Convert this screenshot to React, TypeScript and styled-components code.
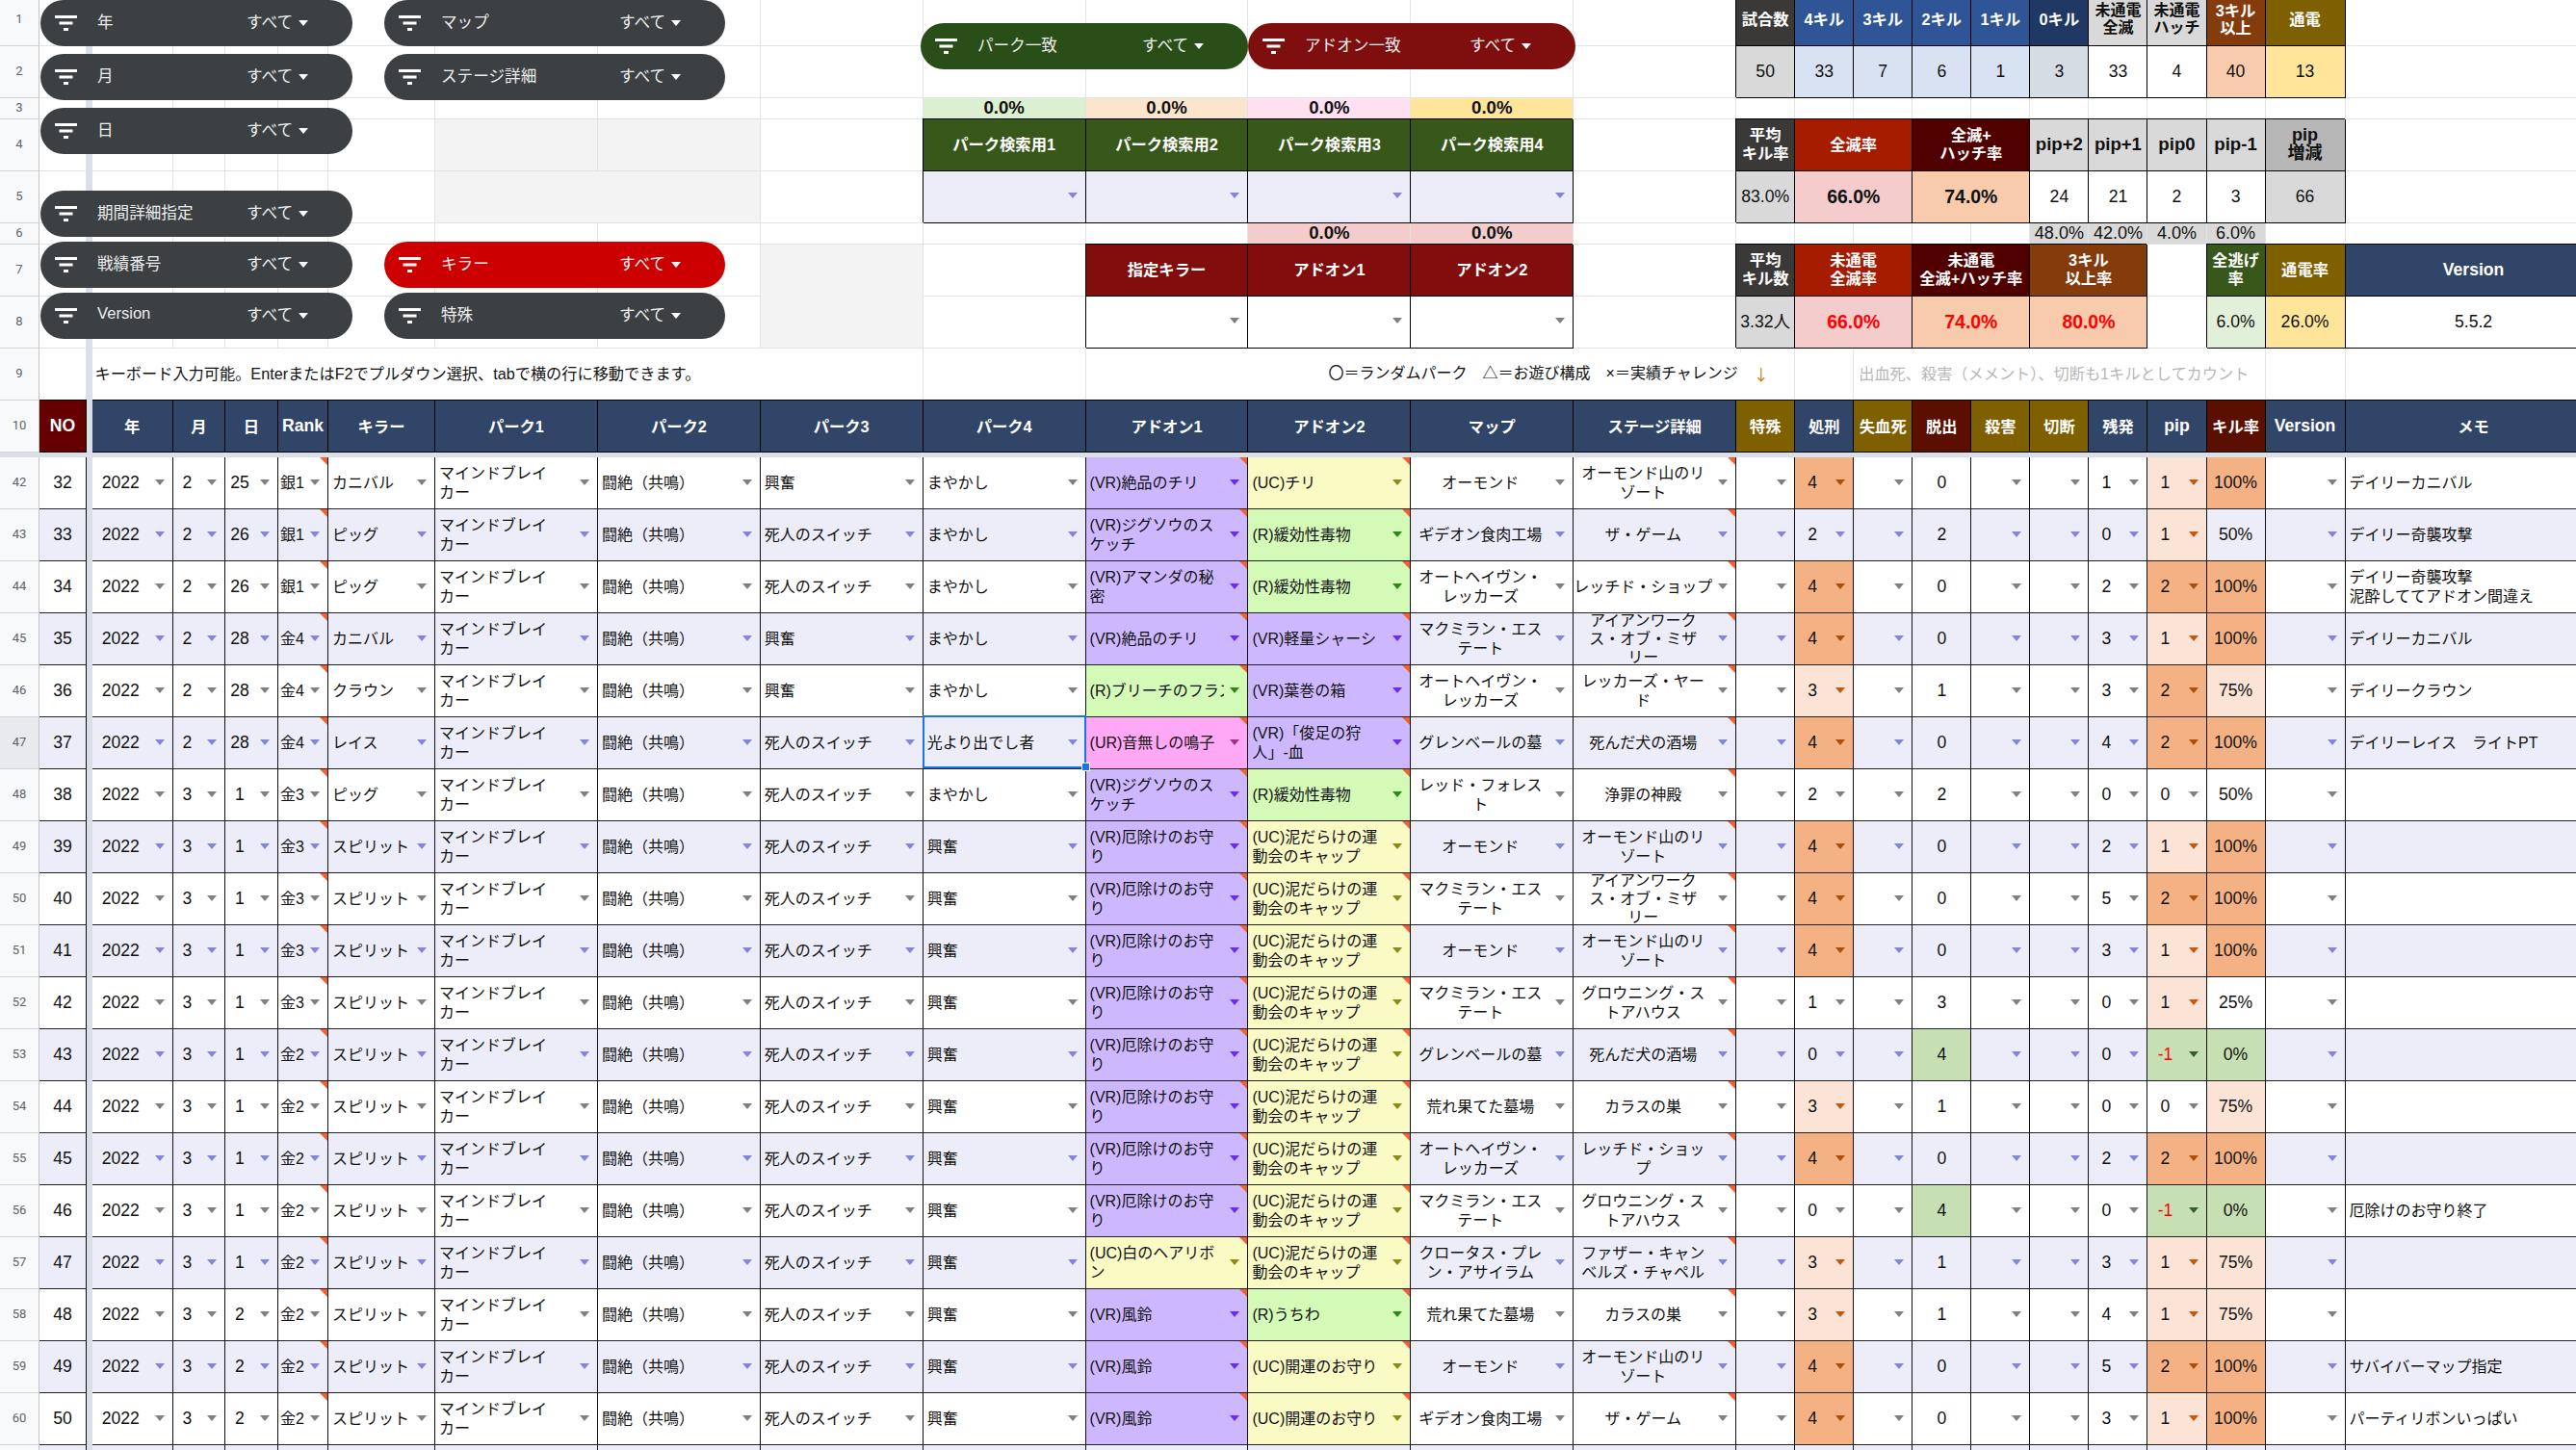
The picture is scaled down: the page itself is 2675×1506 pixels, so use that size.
import React from 'react'
import styled, { createGlobalStyle } from 'styled-components'

const FONT = `"Liberation Sans", "Noto Sans CJK JP", sans-serif`

const GlobalStyle = createGlobalStyle`
  html, body {
    margin: 0;
    padding: 0;
    background: #fff;
    overflow: hidden;
  }
  body {
    font-family: ${FONT};
    color: #111;
  }
`

// sheet columns, left to right (the memo column runs past the window)
const WIDTHS = [
  41, 49, 5.5, 84.5, 54, 55, 52, 111,
  168.9, 168.9, 168.9, 168.9, 168.9, 168.9, 168.9, 168.9,
  61.05, 61.05, 61.05, 61.05, 61.05, 61.05, 61.05, 61.05, 61.05,
  83, 267,
]
const TEMPLATE = WIDTHS.map((w) => `${w}px`).join(' ')

const C = {
  head: 1, no: 2, bar: 3, year: 4, month: 5, day: 6, rank: 7, killer: 8,
  perk1: 9, perk2: 10, perk3: 11, perk4: 12, addon1: 13, addon2: 14, map: 15, stage: 16,
  special: 17, exec: 18, bleed: 19, escape: 20, kill: 21, cut: 22, remain: 23, pip: 24, rate: 25,
  version: 26, memo: 27,
}

const NAVY = '#304567'
const OLIVE = '#7f6000'
const MAROON = '#5b0f00'
const LAVENDER = '#ecedf8'
const FREEZE = '#dadfe8'
const LINE = '#e2e3e3'
const HOT = '#f4b183'
const WARM = '#fbe4d5'
const COOL = '#c6e0b4'

const ARROWS: Record<string, string> = {
  '#ffffff': '#808080',
  [LAVENDER]: '#8585d8',
  [HOT]: '#a8500f',
  [WARM]: '#c05a10',
  [COOL]: '#35602a',
  '#cdb8ff': '#6a2cf0',
  '#fafac5': '#8a8a14',
  '#d4fab8': '#2a8a14',
  '#ffa8f5': '#a0308c',
}

const Sheet = styled.div`
  position: relative;
  width: 2675px;
  height: 1506px;
  overflow: hidden;
`

const TopGrid = styled.div`
  display: grid;
  grid-template-columns: ${TEMPLATE};
  grid-template-rows: 47.5px 54px 22px 54px 54px 22px 54px 54px 54px 54px;
`

const FreezeBar = styled.div`
  height: 5.5px;
  background: ${FREEZE};
`

const DataGrid = styled.div`
  display: grid;
  grid-template-columns: ${TEMPLATE};
  grid-auto-rows: 54px;
`

const RowHead = styled.div<{ $col?: number; $row?: number; $active?: boolean; $lift?: boolean }>`
  ${({ $col }) => ($col ? `grid-column: ${$col};` : '')}
  ${({ $row }) => ($row ? `grid-row: ${$row};` : '')}
  box-sizing: border-box;
  display: flex;
  align-items: center;
  justify-content: center;
  padding-bottom: ${({ $lift }) => ($lift ? '7px' : '2px')};
  background: ${({ $active }) => ($active ? '#e8eaed' : '#f8f9fa')};
  border-right: 1px solid #c4c4c4;
  border-bottom: 1px solid #d4d4d4;
  color: #5f6368;
  font-family: "Roboto", sans-serif;
  font-size: 13px;
`

const BarCell = styled.div<{ $row?: number }>`
  ${({ $row }) => ($row ? `grid-column: ${C.bar}; grid-row: ${$row};` : '')}
  background: ${FREEZE};
`

const Blank = styled.div`
  box-sizing: border-box;
  border-right: 1px solid ${LINE};
  border-bottom: 1px solid ${LINE};
`

const TopCell = styled.div<{
  $col: number
  $row: number
  $span: number
  $rows: number
  $bg: string
  $fg: string
  $weight: number
  $size: number
  $framed: boolean
  $justify: string
  $indent: number
}>`
  grid-column: ${({ $col, $span }) => `${$col} / span ${$span}`};
  grid-row: ${({ $row, $rows }) => `${$row} / span ${$rows}`};
  box-sizing: border-box;
  position: relative;
  z-index: ${({ $framed }) => ($framed ? 1 : 0)};
  display: flex;
  align-items: center;
  justify-content: ${({ $justify }) => $justify};
  padding-left: ${({ $indent }) => $indent}px;
  padding-bottom: ${({ $row }) => ($row === 1 ? '6px' : '0')};
  background: ${({ $bg }) => $bg};
  color: ${({ $fg }) => $fg};
  font-weight: ${({ $weight }) => $weight};
  font-size: ${({ $size }) => $size}px;
  line-height: 18.6px;
  text-align: center;
  white-space: pre;
  border-right: 1px solid ${({ $framed }) => ($framed ? '#000' : LINE)};
  border-bottom: 1px solid ${({ $framed }) => ($framed ? '#000' : LINE)};
  box-shadow: ${({ $framed }) => ($framed ? '-1px -1px 0 #000' : 'none')};
`

const HeaderCell = styled.div<{ $col: number; $bg: string; $latin?: boolean }>`
  grid-column: ${({ $col }) => $col};
  grid-row: 10;
  box-sizing: border-box;
  position: relative;
  z-index: 1;
  display: flex;
  align-items: center;
  justify-content: center;
  background: ${({ $bg }) => $bg};
  color: #fff;
  font-weight: 700;
  font-size: ${({ $latin }) => ($latin ? 17.6 : 16.3)}px;
  border-right: 1px solid #000;
  border-bottom: 1px solid #000;
  box-shadow: 0 -1px 0 #000;
`

const Cell = styled.div<{ $bg: string }>`
  box-sizing: border-box;
  position: relative;
  min-width: 0;
  display: flex;
  align-items: center;
  background: ${({ $bg }) => $bg};
  border-right: 1px solid #111;
  border-bottom: 1px solid #222;
`

const Value = styled.span<{ $align: string; $pad: number; $size: number; $fg?: string }>`
  flex: 1;
  min-width: 0;
  overflow: hidden;
  box-sizing: border-box;
  padding-left: ${({ $pad }) => $pad}px;
  text-align: ${({ $align }) => $align};
  white-space: pre;
  font-size: ${({ $size }) => $size}px;
  line-height: 19.2px;
  color: ${({ $fg }) => $fg ?? '#111'};
`

const Arrow = styled.i<{ $color: string }>`
  flex: none;
  width: 0;
  height: 0;
  margin: 0 8px 2px 6px;
  border-top: 6px solid ${({ $color }) => $color};
  border-left: 5px solid transparent;
  border-right: 5px solid transparent;
`

const NoteMark = styled.i`
  position: absolute;
  top: 0;
  right: 0;
  width: 0;
  height: 0;
  border-top: 8px solid #f4612c;
  border-left: 8px solid transparent;
`

const Selection = styled.div`
  position: absolute;
  z-index: 3;
  top: -2px;
  left: -1px;
  right: -1px;
  bottom: 0;
  border: 2px solid #1a73e8;
`

const SelectionHandle = styled.i`
  position: absolute;
  z-index: 4;
  right: -5px;
  bottom: -3px;
  width: 7px;
  height: 7px;
  background: #1a73e8;
  border: 1px solid #fff;
`

const Pill = styled.div<{ $x: number; $y: number; $w: number; $bg: string }>`
  position: absolute;
  z-index: 5;
  left: ${({ $x }) => $x}px;
  top: ${({ $y }) => $y}px;
  width: ${({ $w }) => $w}px;
  height: 48px;
  box-sizing: border-box;
  display: flex;
  align-items: center;
  padding: 0 46px 5px 15px;
  border-radius: 24px;
  background: ${({ $bg }) => $bg};
  color: #eceded;
  font-size: 16.6px;
`

const PillLabel = styled.span`
  flex: 1;
  margin-left: 21px;
  white-space: nowrap;
`

const PillCaret = styled.i`
  width: 0;
  height: 0;
  margin-left: 6px;
  margin-top: 4px;
  border-top: 6px solid #fff;
  border-left: 5px solid transparent;
  border-right: 5px solid transparent;
`

const DownMark = styled.span`
  font-family: "Noto Sans CJK JP", sans-serif;
  color: #c27c0e;
`

const FilterIcon = () => (
  <svg width='23' height='16' viewBox='0 0 23 16' fill='#fff' style={{ flex: 'none', marginTop: 4 }}>
    <rect x='0' y='0' width='23' height='3' />
    <rect x='4.5' y='6.5' width='14' height='3' />
    <rect x='9' y='13' width='5' height='3' />
  </svg>
)

const Filter = ({ label, x, y, w, bg = '#3c4043' }: { label: string; x: number; y: number; w: number; bg?: string }) => (
  <Pill $x={x} $y={y} $w={w} $bg={bg}>
    <FilterIcon />
    <PillLabel>{label}</PillLabel>
    <span>すべて</span>
    <PillCaret />
  </Pill>
)

type Block = {
  c: number
  r: number
  text?: React.ReactNode
  span?: number
  rows?: number
  bg?: string
  fg?: string
  weight?: number
  size?: number
  framed?: boolean
  justify?: string
  indent?: number
  arrow?: string
}

const BLUE = '#2f5597'
const SLATE = '#3b3838'
const GREY = '#d9d9d9'
const ICE = '#d9e2f3'
const PEACH = '#f8cbad'
const BUTTER = '#ffe599'
const ROSE = '#f4cccc'
const RUST = '#a61c00'
const WINE = '#510000'
const BROWN = '#843c0c'
const MOSS = '#38571a'
const BERRY = '#820d0d'

const head = (c: number, r: number, text: string, bg: string, span = 1): Block => ({
  c, r, text, bg, span, fg: '#fff', weight: 700, size: 16.3, framed: true,
})
const darkHead = (c: number, r: number, text: string, bg = GREY, size = 16): Block => ({
  c, r, text, bg, fg: '#111', weight: 700, size, framed: true,
})
const val = (c: number, r: number, text: string, bg = '#fff', span = 1, extra: Partial<Block> = {}): Block => ({
  c, r, text, bg, span, size: 17.6, framed: true, ...extra,
})
const strong = { weight: 700, size: 19.4 }
const strongRed = { weight: 700, size: 19.4, fg: '#ff0000' }
const pct = (c: number, r: number, bg: string): Block => ({ c, r, text: '0.0%', bg, size: 18.6, weight: 700 })
const drop = (c: number, r: number, bg: string): Block => ({
  c, r, bg, framed: true, justify: 'flex-end', arrow: ARROWS[bg],
})

const BLOCKS: Block[] = [
  // counts
  head(C.special, 1, '試合数', SLATE),
  head(C.exec, 1, '4キル', BLUE),
  head(C.bleed, 1, '3キル', BLUE),
  head(C.escape, 1, '2キル', BLUE),
  head(C.kill, 1, '1キル', BLUE),
  head(C.cut, 1, '0キル', '#1f3864'),
  darkHead(C.remain, 1, '未通電\n全滅'),
  darkHead(C.pip, 1, '未通電\nハッチ'),
  head(C.rate, 1, '3キル\n以上', BROWN),
  head(C.version, 1, '通電', OLIVE),
  val(C.special, 2, '50', GREY),
  val(C.exec, 2, '33', ICE),
  val(C.bleed, 2, '7', ICE),
  val(C.escape, 2, '6', ICE),
  val(C.kill, 2, '1', ICE),
  val(C.cut, 2, '3', '#d6dce4'),
  val(C.remain, 2, '33'),
  val(C.pip, 2, '4'),
  val(C.rate, 2, '40', PEACH),
  val(C.version, 2, '13', BUTTER),
  // rates
  head(C.special, 4, '平均\nキル率', SLATE),
  head(C.exec, 4, '全滅率', RUST, 2),
  head(C.escape, 4, '全滅+\nハッチ率', WINE, 2),
  darkHead(C.cut, 4, 'pip+2', GREY, 18.6),
  darkHead(C.remain, 4, 'pip+1', GREY, 18.6),
  darkHead(C.pip, 4, 'pip0', GREY, 18.6),
  darkHead(C.rate, 4, 'pip-1', GREY, 18.6),
  darkHead(C.version, 4, 'pip\n増減', '#b7b7b7', 18),
  val(C.special, 5, '83.0%', GREY),
  val(C.exec, 5, '66.0%', ROSE, 2, strong),
  val(C.escape, 5, '74.0%', PEACH, 2, strong),
  val(C.cut, 5, '24'),
  val(C.remain, 5, '21'),
  val(C.pip, 5, '2'),
  val(C.rate, 5, '3'),
  val(C.version, 5, '66', GREY),
  { c: C.cut, r: 6, text: '48.0%', bg: GREY, size: 18 },
  { c: C.remain, r: 6, text: '42.0%', bg: GREY, size: 18 },
  { c: C.pip, r: 6, text: '4.0%', bg: GREY, size: 18 },
  { c: C.rate, r: 6, text: '6.0%', bg: GREY, size: 18 },
  // survivors
  head(C.special, 7, '平均\nキル数', SLATE),
  head(C.exec, 7, '未通電\n全滅率', RUST, 2),
  head(C.escape, 7, '未通電\n全滅+ハッチ率', WINE, 2),
  head(C.cut, 7, '3キル\n以上率', BROWN, 2),
  head(C.rate, 7, '全逃げ\n率', MOSS),
  head(C.version, 7, '通電率', OLIVE),
  { ...head(C.memo, 7, 'Version', NAVY), size: 17.6 },
  val(C.special, 8, '3.32人', GREY),
  val(C.exec, 8, '66.0%', ROSE, 2, strongRed),
  val(C.escape, 8, '74.0%', PEACH, 2, strongRed),
  val(C.cut, 8, '80.0%', PEACH, 2, strongRed),
  val(C.rate, 8, '6.0%', '#e2efd9'),
  val(C.version, 8, '26.0%', BUTTER),
  val(C.memo, 8, '5.5.2'),
  // perk search
  pct(C.perk4, 3, '#dbefd1'),
  pct(C.addon1, 3, '#fce5cd'),
  pct(C.addon2, 3, '#ffe0f0'),
  pct(C.map, 3, BUTTER),
  head(C.perk4, 4, 'パーク検索用1', MOSS),
  head(C.addon1, 4, 'パーク検索用2', MOSS),
  head(C.addon2, 4, 'パーク検索用3', MOSS),
  head(C.map, 4, 'パーク検索用4', MOSS),
  drop(C.perk4, 5, LAVENDER),
  drop(C.addon1, 5, LAVENDER),
  drop(C.addon2, 5, LAVENDER),
  drop(C.map, 5, LAVENDER),
  pct(C.addon2, 6, ROSE),
  pct(C.map, 6, ROSE),
  head(C.addon1, 7, '指定キラー', BERRY),
  head(C.addon2, 7, 'アドオン1', BERRY),
  head(C.map, 7, 'アドオン2', BERRY),
  drop(C.addon1, 8, '#ffffff'),
  drop(C.addon2, 8, '#ffffff'),
  drop(C.map, 8, '#ffffff'),
  // unused ranges
  { c: C.perk1, r: 4, bg: '#f3f3f3' },
  { c: C.perk2, r: 4, bg: '#f3f3f3' },
  { c: C.perk1, r: 5, span: 2, bg: '#f3f3f3' },
  { c: C.perk3, r: 7, rows: 2, bg: '#f3f3f3' },
  // notes
  {
    c: C.year, r: 9, span: 8, justify: 'flex-start', indent: 3, size: 16.2,
    text: 'キーボード入力可能。EnterまたはF2でプルダウン選択、tabで横の行に移動できます。',
  },
  {
    c: C.addon1, r: 9, span: 5, justify: 'flex-start', indent: 252, size: 16,
    text: (
      <>
        〇＝ランダムパーク　△＝お遊び構成　×＝実績チャレンジ　<DownMark>↓</DownMark>
      </>
    ),
  },
  {
    c: C.bleed, r: 9, span: 7, justify: 'flex-start', indent: 5, size: 16.2, fg: '#b7b7b7',
    text: '出血死、殺害（メメント）、切断も1キルとしてカウント',
  },
]

const HEADERS: [number, string, string, boolean?][] = [
  [C.no, 'NO', '#660000', true],
  [C.year, '年', NAVY],
  [C.month, '月', NAVY],
  [C.day, '日', NAVY],
  [C.rank, 'Rank', NAVY, true],
  [C.killer, 'キラー', NAVY],
  [C.perk1, 'パーク1', NAVY],
  [C.perk2, 'パーク2', NAVY],
  [C.perk3, 'パーク3', NAVY],
  [C.perk4, 'パーク4', NAVY],
  [C.addon1, 'アドオン1', NAVY],
  [C.addon2, 'アドオン2', NAVY],
  [C.map, 'マップ', NAVY],
  [C.stage, 'ステージ詳細', NAVY],
  [C.special, '特殊', OLIVE],
  [C.exec, '処刑', NAVY],
  [C.bleed, '失血死', OLIVE],
  [C.escape, '脱出', MAROON],
  [C.kill, '殺害', OLIVE],
  [C.cut, '切断', OLIVE],
  [C.remain, '残発', NAVY],
  [C.pip, 'pip', NAVY, true],
  [C.rate, 'キル率', MAROON],
  [C.version, 'Version', NAVY, true],
  [C.memo, 'メモ', NAVY],
]

const TOP_ROWS = [1, 2, 3, 4, 5, 6, 7, 8, 9]
const TOP_AREA = TOP_ROWS.length * WIDTHS.length
const USED = BLOCKS.reduce((sum, b) => sum + (b.span ?? 1) * (b.rows ?? 1), 0) + TOP_ROWS.length * 2
const BLANKS = Array.from({ length: TOP_AREA - USED })

const ALMOND = 'オーモンド山のリ\nゾート'
const IRON = 'アイアンワーク\nス・オブ・ミザ\nリー'
const GROAN = 'グロウニング・ス\nトアハウス'
const MAC = 'マクミラン・エス\nテート'
const AUTO = 'オートヘイヴン・\nレッカーズ'
const AMULET = '(VR)厄除けのお守\nり'
const CAP = '(UC)泥だらけの運\n動会のキャップ'
const SWITCH = '死人のスイッチ'
const MASK = 'まやかし'
const EXC = '興奮'
const SPIRIT = 'スピリット'

// no, month, day, rank, killer, perk3, perk4, addon1, addon2, map, stage, exec, escape, remain, pip, rate, memo
type Game = [number, number, number, string, string, string, string, string, string, string, string, number, number, number, number, number, string?]

const GAMES: Game[] = [
  [32, 2, 25, '銀1', 'カニバル', EXC, MASK, '(VR)絶品のチリ', '(UC)チリ', 'オーモンド', ALMOND, 4, 0, 1, 1, 100, 'デイリーカニバル'],
  [33, 2, 26, '銀1', 'ピッグ', SWITCH, MASK, '(VR)ジグソウのス\nケッチ', '(R)緩効性毒物', 'ギデオン食肉工場', 'ザ・ゲーム', 2, 2, 0, 1, 50, 'デイリー奇襲攻撃'],
  [34, 2, 26, '銀1', 'ピッグ', SWITCH, MASK, '(VR)アマンダの秘\n密', '(R)緩効性毒物', AUTO, 'レッチド・ショップ', 4, 0, 2, 2, 100, 'デイリー奇襲攻撃\n泥酔しててアドオン間違え'],
  [35, 2, 28, '金4', 'カニバル', EXC, MASK, '(VR)絶品のチリ', '(VR)軽量シャーシ', MAC, IRON, 4, 0, 3, 1, 100, 'デイリーカニバル'],
  [36, 2, 28, '金4', 'クラウン', EXC, MASK, '(R)ブリーチのフラスコ', '(VR)葉巻の箱', AUTO, 'レッカーズ・ヤー\nド', 3, 1, 3, 2, 75, 'デイリークラウン'],
  [37, 2, 28, '金4', 'レイス', SWITCH, '光より出でし者', '(UR)音無しの鳴子', '(VR)「俊足の狩\n人」-血', 'グレンベールの墓', '死んだ犬の酒場', 4, 0, 4, 2, 100, 'デイリーレイス　ライトPT'],
  [38, 3, 1, '金3', 'ピッグ', SWITCH, MASK, '(VR)ジグソウのス\nケッチ', '(R)緩効性毒物', 'レッド・フォレス\nト', '浄罪の神殿', 2, 2, 0, 0, 50],
  [39, 3, 1, '金3', SPIRIT, SWITCH, EXC, AMULET, CAP, 'オーモンド', ALMOND, 4, 0, 2, 1, 100],
  [40, 3, 1, '金3', SPIRIT, SWITCH, EXC, AMULET, CAP, MAC, IRON, 4, 0, 5, 2, 100],
  [41, 3, 1, '金3', SPIRIT, SWITCH, EXC, AMULET, CAP, 'オーモンド', ALMOND, 4, 0, 3, 1, 100],
  [42, 3, 1, '金3', SPIRIT, SWITCH, EXC, AMULET, CAP, MAC, GROAN, 1, 3, 0, 1, 25],
  [43, 3, 1, '金2', SPIRIT, SWITCH, EXC, AMULET, CAP, 'グレンベールの墓', '死んだ犬の酒場', 0, 4, 0, -1, 0],
  [44, 3, 1, '金2', SPIRIT, SWITCH, EXC, AMULET, CAP, '荒れ果てた墓場', 'カラスの巣', 3, 1, 0, 0, 75],
  [45, 3, 1, '金2', SPIRIT, SWITCH, EXC, AMULET, CAP, AUTO, 'レッチド・ショッ\nプ', 4, 0, 2, 2, 100],
  [46, 3, 1, '金2', SPIRIT, SWITCH, EXC, AMULET, CAP, MAC, GROAN, 0, 4, 0, -1, 0, '厄除けのお守り終了'],
  [47, 3, 1, '金2', SPIRIT, SWITCH, EXC, '(UC)白のヘアリボ\nン', CAP, 'クロータス・プレ\nン・アサイラム', 'ファザー・キャン\nベルズ・チャペル', 3, 1, 3, 1, 75],
  [48, 3, 2, '金2', SPIRIT, SWITCH, EXC, '(VR)風鈴', '(R)うちわ', '荒れ果てた墓場', 'カラスの巣', 3, 1, 4, 1, 75],
  [49, 3, 2, '金2', SPIRIT, SWITCH, EXC, '(VR)風鈴', '(UC)開運のお守り', 'オーモンド', ALMOND, 4, 0, 5, 2, 100, 'サバイバーマップ指定'],
  [50, 3, 2, '金2', SPIRIT, SWITCH, EXC, '(VR)風鈴', '(UC)開運のお守り', 'ギデオン食肉工場', 'ザ・ゲーム', 4, 0, 3, 1, 100, 'パーティリボンいっぱい'],
]

const rarity = (addon: string) => {
  if (addon.startsWith('(VR)')) return '#cdb8ff'
  if (addon.startsWith('(UC)')) return '#fafac5'
  if (addon.startsWith('(UR)')) return '#ffa8f5'
  return '#d4fab8'
}
const execHeat = (n: number, base: string) => (n === 4 ? HOT : n === 3 ? WARM : base)
const pipHeat = (n: number, base: string) => (n === 2 ? HOT : n === 1 ? WARM : n === -1 ? COOL : base)
const rateHeat = (n: number, base: string) => (n === 100 ? HOT : n === 75 ? WARM : n === 0 ? COOL : base)

type DataCellProps = {
  bg: string
  text?: string
  align?: string
  pad?: number
  size?: number
  fg?: string
  arrow?: boolean
  note?: boolean
  selected?: boolean
}

const DataCell = ({ bg, text = '', align = 'center', pad = 0, size = 17.6, fg, arrow = true, note, selected }: DataCellProps) => (
  <Cell $bg={bg}>
    <Value $align={align} $pad={pad} $size={size} $fg={fg}>{text}</Value>
    {arrow && <Arrow $color={ARROWS[bg]} />}
    {note && <NoteMark />}
    {selected && (
      <>
        <Selection />
        <SelectionHandle />
      </>
    )}
  </Cell>
)

const GameRow = ({ game, sheetRow }: { game: Game; sheetRow: number }) => {
  const [no, month, day, rank, killer, perk3, perk4, addon1, addon2, map, stage, exec, escape, remain, pip, rate, memo] = game
  const base = sheetRow % 2 === 1 ? LAVENDER : '#ffffff'
  const active = sheetRow === 47
  return (
    <>
      <RowHead $active={active}>{sheetRow}</RowHead>
      <DataCell bg={base} text={String(no)} arrow={false} />
      <BarCell />
      <DataCell bg={base} text='2022' />
      <DataCell bg={base} text={String(month)} />
      <DataCell bg={base} text={String(day)} />
      <DataCell bg={base} text={rank} align='left' pad={2} size={16} note />
      <DataCell bg={base} text={killer} align='left' pad={4} size={16} />
      <DataCell bg={base} text={'マインドブレイ\nカー'} align='left' pad={4} size={16} />
      <DataCell bg={base} text='闘絶（共鳴）' align='left' pad={4} size={16} />
      <DataCell bg={base} text={perk3} align='left' pad={4} size={16} />
      <DataCell bg={base} text={perk4} align='left' pad={4} size={16} selected={active} />
      <DataCell bg={rarity(addon1)} text={addon1} align='left' pad={4} size={16} note />
      <DataCell bg={rarity(addon2)} text={addon2} align='left' pad={4} size={16} note />
      <DataCell bg={base} text={map} size={16} />
      <DataCell bg={base} text={stage} size={16} note />
      <DataCell bg={base} />
      <DataCell bg={execHeat(exec, base)} text={String(exec)} />
      <DataCell bg={base} />
      <DataCell bg={escape === 4 ? COOL : base} text={String(escape)} arrow={false} />
      <DataCell bg={base} />
      <DataCell bg={base} />
      <DataCell bg={base} text={String(remain)} />
      <DataCell bg={pipHeat(pip, base)} text={String(pip)} fg={pip < 0 ? '#ff0000' : undefined} />
      <DataCell bg={rateHeat(rate, base)} text={`${rate}%`} arrow={false} />
      <DataCell bg={base} />
      <DataCell bg={base} text={memo} align='left' pad={4} size={16} arrow={false} />
    </>
  )
}

const App = () => (
  <>
    <GlobalStyle />
    <Sheet>
      <TopGrid>
        {[...TOP_ROWS, 10].map((r) => (
          <React.Fragment key={r}>
            <RowHead $col={C.head} $row={r} $lift={r === 1}>{r}</RowHead>
            <BarCell $row={r} />
          </React.Fragment>
        ))}
        {HEADERS.map(([col, text, bg, latin]) => (
          <HeaderCell key={col} $col={col} $bg={bg} $latin={latin}>{text}</HeaderCell>
        ))}
        {BLOCKS.map((b) => (
          <TopCell
            key={`${b.c}-${b.r}`}
            $col={b.c}
            $row={b.r}
            $span={b.span ?? 1}
            $rows={b.rows ?? 1}
            $bg={b.bg ?? '#fff'}
            $fg={b.fg ?? '#111'}
            $weight={b.weight ?? 400}
            $size={b.size ?? 17.6}
            $framed={!!b.framed}
            $justify={b.justify ?? 'center'}
            $indent={b.indent ?? 0}
          >
            {b.text}
            {b.arrow && <Arrow $color={b.arrow} />}
          </TopCell>
        ))}
        {BLANKS.map((_, i) => (
          <Blank key={i} />
        ))}
      </TopGrid>
      <FreezeBar />
      <DataGrid>
        {GAMES.map((game, i) => (
          <GameRow key={game[0]} game={game} sheetRow={42 + i} />
        ))}
        <RowHead />
        {WIDTHS.slice(1).map((_, i) =>
          i === 1 ? <BarCell key={i} /> : <Cell key={i} $bg={LAVENDER} />
        )}
      </DataGrid>

      <Filter label='年' x={42} y={0} w={324} />
      <Filter label='月' x={42} y={56} w={324} />
      <Filter label='日' x={42} y={112} w={324} />
      <Filter label='期間詳細指定' x={42} y={198} w={324} />
      <Filter label='戦績番号' x={42} y={251} w={324} />
      <Filter label='Version' x={42} y={304} w={324} />
      <Filter label='マップ' x={399} y={0} w={354} />
      <Filter label='ステージ詳細' x={399} y={56} w={354} />
      <Filter label='キラー' x={399} y={251} w={354} bg='#cc0000' />
      <Filter label='特殊' x={399} y={304} w={354} />
      <Filter label='パーク一致' x={956} y={24} w={340} bg='#2a4e17' />
      <Filter label='アドオン一致' x={1296} y={24} w={340} bg='#7f0f0f' />
    </Sheet>
  </>
)

export default App
